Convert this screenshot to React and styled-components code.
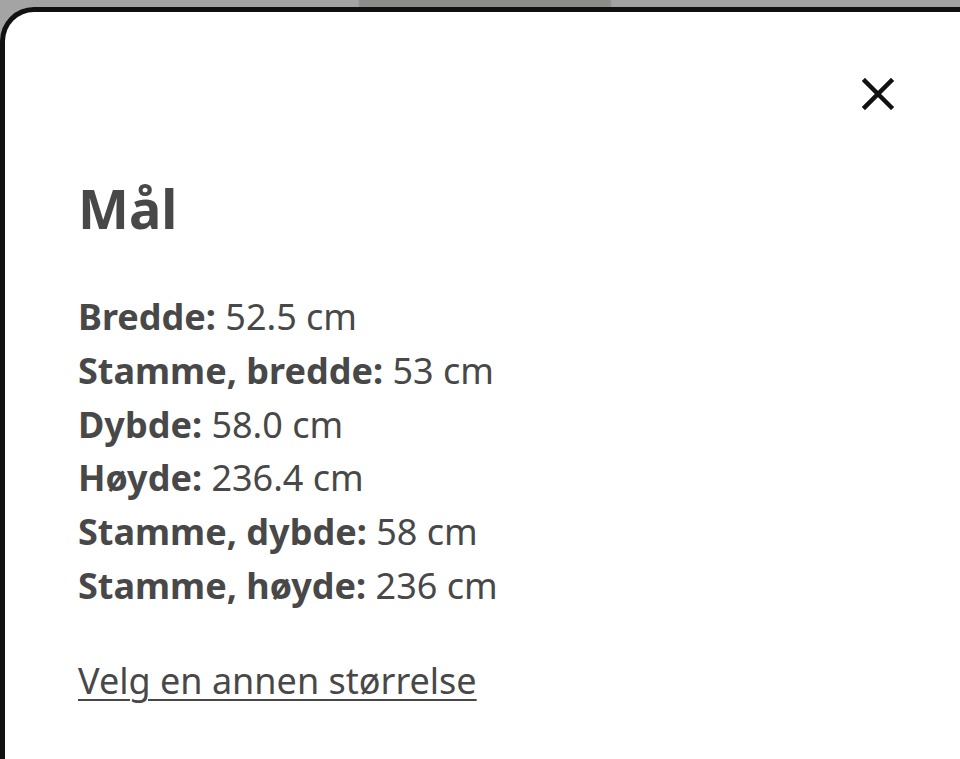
import React from 'react';
import styled, { createGlobalStyle } from 'styled-components';

const GlobalStyle = createGlobalStyle`
    html, body {
        margin: 0;
        padding: 0;
        height: 100%;
        overflow: hidden;
    }
    body {
        background: linear-gradient(90deg, #a4a4a4 0, #a4a4a4 358px, #8c8c89 360px, #8c8c89 610px, #a2a2a2 612px);
        font-family: "Noto Sans", "Open Sans", sans-serif;
    }
`;

const dimensions = [
    { label: 'Bredde:', value: '52.5 cm' },
    { label: 'Stamme, bredde:', value: '53 cm' },
    { label: 'Dybde:', value: '58.0 cm' },
    { label: 'Høyde:', value: '236.4 cm' },
    { label: 'Stamme, dybde:', value: '58 cm' },
    { label: 'Stamme, høyde:', value: '236 cm' },
];

function CloseIcon() {
    return (
        <svg width="32" height="32" viewBox="0 0 32 32" aria-hidden="true">
            <path d="M3 3 L29 29 M29 3 L3 29" stroke="#111" strokeWidth="4.5" strokeLinecap="square" fill="none" />
        </svg>
    );
}

export default function App() {
    return (
        <>
            <GlobalStyle />
            <Sheet>
                <Header>
                    <CloseButton aria-label="Lukk">
                        <CloseIcon />
                    </CloseButton>
                </Header>
                <Title>Mål</Title>
                <List>
                    {dimensions.map((d) => (
                        <Row key={d.label}>
                            <Label>{d.label}</Label> {d.value}
                        </Row>
                    ))}
                </List>
                <SizeLink href="#">Velg en annen størrelse</SizeLink>
            </Sheet>
        </>
    );
}

const Sheet = styled.div`
    margin-top: 7px;
    width: 1000px;
    height: 752px;
    overflow: hidden;
    background: #fff;
    border: 5px solid #111;
    border-bottom: none;
    border-radius: 34px 34px 0 0;
    box-sizing: border-box;
    padding: 0 0 0 73px;
    color: #484848;
`;

const Header = styled.div`
    display: flex;
    justify-content: flex-end;
    width: 816px;
    padding-top: 66px;
`;

const CloseButton = styled.button`
    border: none;
    background: none;
    padding: 0;
    width: 32px;
    height: 32px;
    cursor: pointer;
    display: flex;
`;

const Title = styled.h1`
    margin: 71px 0 0;
    font-size: 54px;
    font-weight: 700;
    line-height: 1;
    color: #484848;
`;

const List = styled.div`
    margin-top: 55px;
    display: flex;
    flex-direction: column;
`;

const Row = styled.div`
    font-size: 36px;
    line-height: 53.8px;
    color: #484848;
`;

const Label = styled.span`
    font-weight: 700;
`;

const SizeLink = styled.a`
    display: inline-block;
    margin-top: 46px;
    font-size: 36px;
    line-height: 44px;
    color: #484848;
    text-decoration: underline;
    text-decoration-thickness: 2px;
    text-underline-offset: 5px;
`;
